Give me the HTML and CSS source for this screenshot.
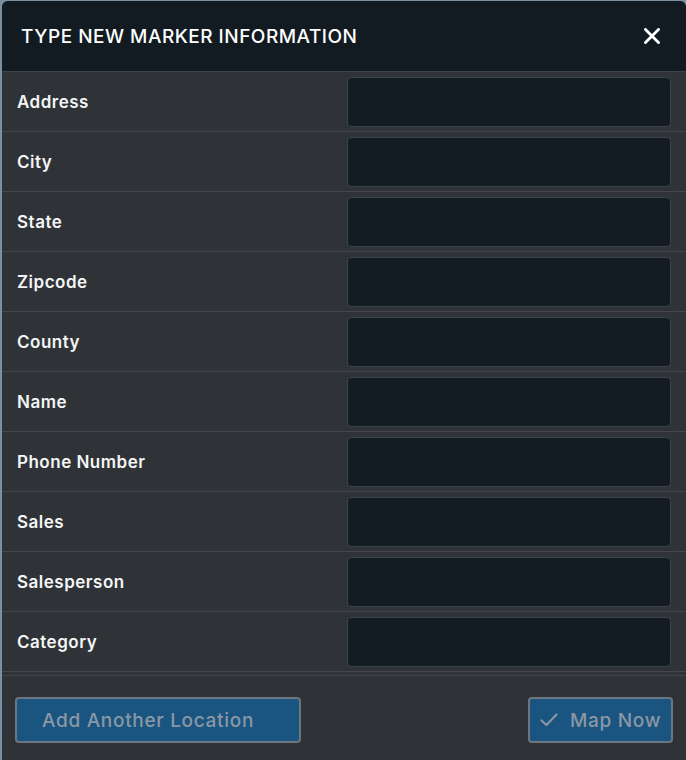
FILE: index.html
```html
<!DOCTYPE html>
<html lang="en">
<head>
<meta charset="utf-8">
<title>Type New Marker Information</title>
<link rel="stylesheet" href="styles.css">
</head>
<body>
<div class="modal">
  <div class="modal-header">
    <h1 class="modal-title">TYPE NEW MARKER INFORMATION</h1>
    <button class="close-btn" aria-label="Close">
      <svg width="16" height="16" viewBox="0 0 16 16"><path d="M1.5 1.5 L14.5 14.5 M14.5 1.5 L1.5 14.5" stroke="#ffffff" stroke-width="2.8" stroke-linecap="square" fill="none"/></svg>
    </button>
  </div>
  <div class="modal-body">
    <div class="field-row"><label class="field-label">Address</label><input class="field-input" type="text"></div>
    <div class="field-row"><label class="field-label">City</label><input class="field-input" type="text"></div>
    <div class="field-row"><label class="field-label">State</label><input class="field-input" type="text"></div>
    <div class="field-row"><label class="field-label">Zipcode</label><input class="field-input" type="text"></div>
    <div class="field-row"><label class="field-label">County</label><input class="field-input" type="text"></div>
    <div class="field-row"><label class="field-label">Name</label><input class="field-input" type="text"></div>
    <div class="field-row"><label class="field-label">Phone Number</label><input class="field-input" type="text"></div>
    <div class="field-row"><label class="field-label">Sales</label><input class="field-input" type="text"></div>
    <div class="field-row"><label class="field-label">Salesperson</label><input class="field-input" type="text"></div>
    <div class="field-row"><label class="field-label">Category</label><input class="field-input" type="text"></div>
  </div>
  <div class="modal-footer">
    <button class="btn btn-add">Add Another Location</button>
    <button class="btn btn-map">
      <svg class="check" width="18" height="14" viewBox="0 0 18 14"><path d="M1.5 7.5 L6.5 12 L16.5 1.5" stroke="#8a97a2" stroke-width="2.2" fill="none" stroke-linecap="round" stroke-linejoin="round"/></svg>
      <span>Map Now</span>
    </button>
  </div>
</div>
</body>
</html>
```

FILE: styles.css
```css
html, body {
  margin: 0;
  padding: 0;
  height: 100%;
}
body {
  background: #7a8fa0;
  font-family: "Inter", "Open Sans", "Liberation Sans", sans-serif;
  overflow: hidden;
}
.modal {
  margin: 1px 0 0 2px;
  width: 684px;
  height: 759px;
  background: #2f3337;
  border-radius: 6px 6px 0 0;
  overflow: hidden;
  display: flex;
  flex-direction: column;
}
.modal-header {
  height: 70px;
  background: #121b21;
  border-bottom: 1px solid #3c444b;
  display: flex;
  align-items: center;
  justify-content: space-between;
  padding: 0 26px 0 19px;
  flex: none;
}
.modal-title {
  margin: 0;
  color: #ffffff;
  font-size: 19px;
  font-weight: 500;
  letter-spacing: 0.5px;
}
.close-btn {
  background: none;
  border: 0;
  padding: 0;
  width: 16px;
  height: 16px;
  display: flex;
}
.modal-body {
  display: flex;
  flex-direction: column;
  flex: none;
  border-bottom: 1px solid #41474d;
  padding-bottom: 3px;
}
.field-row {
  height: 59px;
  border-bottom: 1px solid #41474d;
  display: flex;
  align-items: center;
  justify-content: space-between;
  padding: 0 15px 0 15px;
}
.field-label {
  color: #f4f5f6;
  font-size: 17px;
  font-weight: 600;
  letter-spacing: 0.5px;
  margin-top: 1px;
}
.field-input {
  width: 324px;
  height: 50px;
  box-sizing: border-box;
  background: #121c22;
  border: 1px solid #3d454c;
  border-radius: 4px;
  margin-top: 1px;
  color: #fff;
  outline: none;
}
.modal-footer {
  display: flex;
  justify-content: space-between;
  align-items: flex-start;
  padding: 21px 13px 0 13px;
}
.btn {
  height: 46px;
  box-sizing: border-box;
  background: #1a5582;
  border: 2px solid #6b7680;
  border-radius: 4px;
  color: #8b98a3;
  font-family: inherit;
  font-size: 19px;
  font-weight: 500;
  letter-spacing: 0.7px;
  display: flex;
  align-items: center;
}
.btn-add {
  width: 286px;
  padding: 0 0 0 25px;
}
.btn-map {
  width: 145px;
  padding: 0 0 0 10px;
  gap: 12px;
}
.check {
  flex: none;
}
```
